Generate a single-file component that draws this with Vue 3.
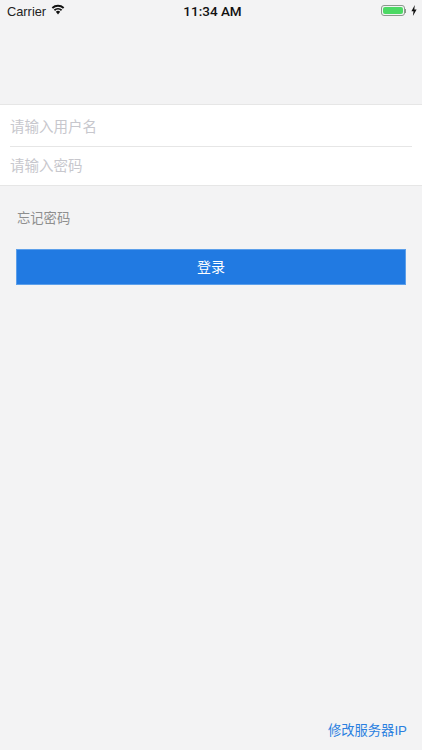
<script setup>
</script>

<template>
  <div class="page">
    <div class="status">
      <div class="status-left">
        <span class="carrier">Carrier</span>
        <svg class="wifi" width="14" height="11" viewBox="0 0 16 12">
          <path d="M8 11.6 5.5 8.7a3.7 3.7 0 0 1 5 0z" fill="#111" />
          <path d="M4.6 7.6 3.2 6a7.3 7.3 0 0 1 9.6 0l-1.4 1.6a5.2 5.2 0 0 0-6.8 0z" fill="#111" />
          <path d="M2.3 5 .8 3.3a10.9 10.9 0 0 1 14.4 0L13.7 5a8.7 8.7 0 0 0-11.4 0z" fill="#111" />
        </svg>
      </div>
      <span class="time">11:34 AM</span>
      <div class="status-right">
        <div class="battery"><div class="battery-fill"></div></div>
        <div class="battery-cap"></div>
        <svg class="bolt" width="6" height="11" viewBox="0 0 6 11">
          <path d="M3.8 0 .4 6.2h2.1L1.9 11 5.6 4.5H3.3z" fill="#111" />
        </svg>
      </div>
    </div>

    <div class="form">
      <div class="field first">请输入用户名</div>
      <div class="divider"></div>
      <div class="field second">请输入密码</div>
    </div>

    <div class="forgot">忘记密码</div>
    <button class="login" type="button">登录</button>

    <div class="spacer"></div>
    <div class="footer">修改服务器IP</div>
  </div>
</template>

<style scoped>
.page {
  width: 422px;
  height: 750px;
  box-sizing: border-box;
  background: #f3f3f4;
  display: flex;
  flex-direction: column;
  font-family: "Liberation Sans", "Noto Sans CJK SC", sans-serif;
  overflow: hidden;
}
.status {
  height: 21px;
  display: grid;
  grid-template-columns: 1fr auto 1fr;
  align-items: center;
  color: #222;
  font-size: 13px;
  flex-shrink: 0;
}
.status-left {
  display: flex;
  align-items: center;
  padding-left: 7px;
  gap: 5px;
}
.carrier {
  font-size: 12.8px;
  padding-top: 1px;
}
.wifi {
  margin-top: -2px;
}
.time {
  font-family: Roboto, "Liberation Sans", sans-serif;
  font-weight: 500;
  font-size: 13.5px;
  padding-left: 3px;
  color: #111;
}
.status-right {
  display: flex;
  align-items: center;
  justify-content: flex-end;
  padding-right: 5px;
}
.battery {
  width: 20px;
  height: 7px;
  border: 1px solid #8a9a8c;
  border-radius: 3px;
  padding: 1px;
  box-sizing: content-box;
}
.battery-fill {
  width: 100%;
  height: 100%;
  background: #4cd964;
  border-radius: 2px;
}
.battery-cap {
  width: 1.5px;
  height: 4px;
  background: #8a9a8c;
  margin-right: 5px;
}
.form {
  margin-top: 83px;
  background: #fff;
  border-top: 1px solid #e6e6e6;
  border-bottom: 1px solid #e6e6e6;
  height: 82px;
  box-sizing: border-box;
  display: flex;
  flex-direction: column;
}
.field {
  padding-left: 10px;
  display: flex;
  align-items: center;
  font-size: 14.5px;
  color: #c7c7cd;
  flex-shrink: 0;
  box-sizing: border-box;
}
.first {
  height: 41px;
}
.second {
  height: 38px;
  padding-bottom: 4px;
}
.divider {
  height: 1px;
  margin-left: 10px;
  margin-right: 10px;
  background: #e6e6e6;
  flex-shrink: 0;
}
.forgot {
  margin-top: 24px;
  margin-left: 17px;
  height: 18px;
  line-height: 18px;
  font-size: 13.3px;
  color: #8e8e8e;
}
.login {
  margin: 21px 16px 0 16px;
  height: 36px;
  border: 1px solid #5c9fea;
  background: #217ae2;
  color: #fff;
  font-size: 14px;
  font-family: inherit;
  padding: 0 0 2px;
  flex-shrink: 0;
}
.spacer {
  flex: 1;
}
.footer {
  text-align: right;
  padding-right: 15px;
  padding-bottom: 9px;
  font-size: 13.3px;
  line-height: 20px;
  color: #2a7fe0;
}
</style>
